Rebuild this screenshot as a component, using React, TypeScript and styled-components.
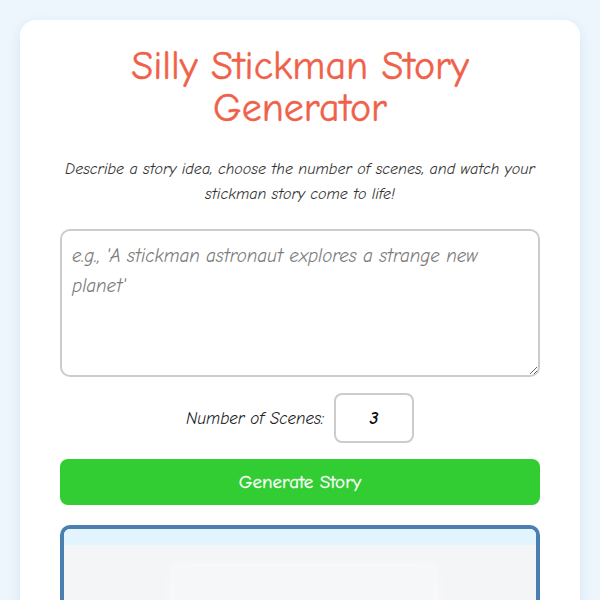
import React, { useState } from "react";
import styled, { createGlobalStyle } from "styled-components";

const GlobalStyle = createGlobalStyle`
  html, body {
    margin: 0;
    padding: 0;
    background: #eef6fd;
  }
  body {
    font-family: "Comic Neue", "Open Sans", sans-serif;
  }
  * {
    box-sizing: border-box;
  }
`;

export default function App() {
  const [idea, setIdea] = useState("");
  const [scenes, setScenes] = useState(3);

  return (
    <>
      <GlobalStyle />
      <Page>
        <Card>
          <Title>Silly Stickman Story Generator</Title>
          <Intro>
            Describe a story idea, choose the number of scenes, and watch your
            stickman story come to life!
          </Intro>
          <IdeaInput
            value={idea}
            onChange={(e) => setIdea(e.target.value)}
            placeholder="e.g., 'A stickman astronaut explores a strange new planet'"
          />
          <SceneRow>
            <SceneLabel htmlFor="scene-count">Number of Scenes:</SceneLabel>
            <SceneInput
              id="scene-count"
              type="text"
              value={scenes}
              onChange={(e) => setScenes(Number(e.target.value) || 0)}
            />
          </SceneRow>
          <GenerateButton>Generate Story</GenerateButton>
          <StoryPanel>
            <PanelSky />
            <PanelStage>
              <StageCard />
            </PanelStage>
          </StoryPanel>
        </Card>
      </Page>
    </>
  );
}

// Styled components
const Page = styled.div`
  height: 600px;
  overflow: hidden;
  padding: 20px;
`;

const Card = styled.div`
  background: #fff;
  border-radius: 16px;
  box-shadow: 0 4px 14px rgba(120, 160, 200, 0.18);
  padding: 25px 40px 40px;
  display: flex;
  flex-direction: column;
  align-items: stretch;
`;

const Title = styled.h1`
  margin: 0 0 28px;
  text-align: center;
  color: #f0614a;
  font-size: 40px;
  line-height: 42px;
  font-weight: 400;
  -webkit-text-stroke: 0.4px #f0614a;
`;

const Intro = styled.p`
  margin: 0 0 22px;
  text-align: center;
  font-style: italic;
  color: #333;
  font-size: 16px;
  line-height: 25px;
`;

const IdeaInput = styled.textarea`
  width: 100%;
  height: 148px;
  flex-shrink: 0;
  border: 2px solid #ccc;
  border-radius: 10px;
  padding: 10px 10px;
  font-family: inherit;
  font-style: italic;
  font-size: 19px;
  line-height: 30px;
  color: #333;
  resize: vertical;
  outline: none;

  &::placeholder {
    color: #7c7c7c;
  }
`;

const SceneRow = styled.div`
  display: flex;
  justify-content: center;
  align-items: center;
  gap: 10px;
  margin: 16px 0 16px;
`;

const SceneLabel = styled.label`
  font-style: italic;
  font-size: 17px;
  color: #222;
`;

const SceneInput = styled.input`
  width: 80px;
  height: 50px;
  border: 2px solid #ccc;
  border-radius: 8px;
  text-align: center;
  font-family: inherit;
  font-style: italic;
  font-weight: 700;
  font-size: 18px;
  color: #111;
  outline: none;
`;

const GenerateButton = styled.button`
  width: 100%;
  height: 46px;
  flex-shrink: 0;
  border: none;
  border-radius: 8px;
  background: #32cd32;
  color: #fff;
  font-family: inherit;
  font-weight: 400;
  font-size: 19px;
  -webkit-text-stroke: 0.3px #fff;
  cursor: pointer;
`;

const StoryPanel = styled.div`
  margin-top: 20px;
  border: 4px solid #4a7fb0;
  border-radius: 10px;
  overflow: hidden;
  display: flex;
  flex-direction: column;
  height: 300px;
  flex-shrink: 0;
`;

const PanelSky = styled.div`
  height: 16px;
  background: #e2f5fe;
`;

const PanelStage = styled.div`
  flex: 1;
  background: #f4f5f7;
  padding: 22px 0 0 110px;
`;

const StageCard = styled.div`
  width: 260px;
  height: 200px;
  background: #f6f7f8;
  box-shadow: 0 0 12px rgba(255, 255, 255, 0.9);
`;
